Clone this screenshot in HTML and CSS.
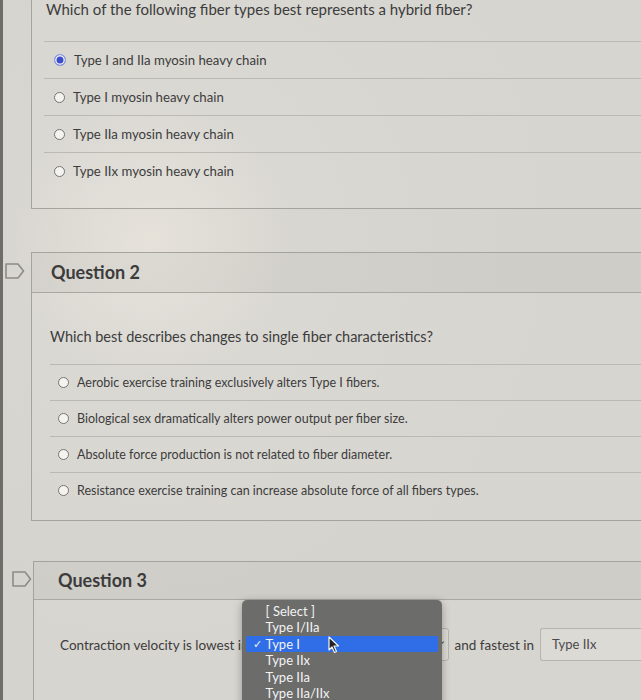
FILE: index.html
```html
<!DOCTYPE html>
<html lang="en">
<head>
  <meta charset="UTF-8" />
  <meta name="viewport" content="width=device-width, initial-scale=1" />
  <title>Quiz</title>
  <link rel="stylesheet" href="styles.css">
</head>
<body>

  <div class="screen">

    <div class="question q1">
      <div class="flag-col"></div>
      <div class="panel">
        <div class="q-body">
          <p class="q-text">Which of the following fiber types best represents a hybrid fiber?</p>
          <div class="answers">
            <div class="answer"><span class="radio checked"></span>Type I and IIa myosin heavy chain</div>
            <div class="answer"><span class="radio"></span>Type I myosin heavy chain</div>
            <div class="answer"><span class="radio"></span>Type IIa myosin heavy chain</div>
            <div class="answer"><span class="radio"></span>Type IIx myosin heavy chain</div>
          </div>
        </div>
      </div>
    </div>

    <div class="question q2">
      <div class="flag-col">
        <svg class="flag" width="22" height="18" viewBox="0 0 22 18"><path d="M2 2 H14 L19.5 9 L14 16 H2 Z" /></svg>
      </div>
      <div class="panel">
        <div class="q-header">Question 2</div>
        <div class="q-body">
          <p class="q-text">Which best describes changes to single fiber characteristics?</p>
          <div class="answers">
            <div class="answer"><span class="radio"></span>Aerobic exercise training exclusively alters Type I fibers.</div>
            <div class="answer"><span class="radio"></span>Biological sex dramatically alters power output per fiber size.</div>
            <div class="answer"><span class="radio"></span>Absolute force production is not related to fiber diameter.</div>
            <div class="answer"><span class="radio"></span>Resistance exercise training can increase absolute force of all fibers types.</div>
          </div>
        </div>
      </div>
    </div>

    <div class="question q3">
      <div class="flag-col">
        <svg class="flag" width="22" height="18" viewBox="0 0 22 18"><path d="M2 2 H14 L19.5 9 L14 16 H2 Z" /></svg>
      </div>
      <div class="panel">
        <div class="q-header">Question 3</div>
        <div class="q-body">
          <div class="fill-line">
            <span>Contraction velocity is lowest in</span>
            <div class="select first">
              <span class="arrow">&#8964;</span>
              <ul class="menu">
                <li>[ Select ]</li>
                <li>Type I/IIa</li>
                <li class="active"><span class="check">&#10003;</span>Type I</li>
                <li>Type IIx</li>
                <li>Type IIa</li>
                <li>Type IIa/IIx</li>
                <svg class="cursor" width="12" height="18" viewBox="0 0 12 18"><path d="M1 1 L1 14 L4 11 L6.5 16.5 L8.5 15.5 L6 10 L10.5 10 Z" /></svg>
              </ul>
            </div>
            <span>and fastest in</span>
            <div class="select second">Type IIx</div>
          </div>
        </div>
      </div>
    </div>

  </div>

</body>
</html>
```

FILE: styles.css
```css
html, body {
  margin: 0;
  padding: 0;
}

body {
  width: 641px;
  height: 700px;
  overflow: hidden;
  font-family: Lato, "Open Sans", sans-serif;
  color: #3c3c3c;
  background: radial-gradient(circle at 150px 240px, #e6e2da 0, #d8d6d1 140px, #d5d3ce 400px);
}

.screen {
  height: 700px;
  border-left: 3px solid #6f6d6a;
}

.question {
  display: grid;
  grid-template-columns: 28px 1fr;
}

.q2 {
  margin-top: 43px;
}

.q3 {
  margin-top: 40px;
  grid-template-columns: 30px 1fr;
}

.flag-col {
  padding-top: 10px;
}

.q2 .flag-col {
  padding-left: 1px;
}

.q3 .flag-col {
  padding-top: 9px;
  padding-left: 8px;
}

.flag {
  display: block;
  fill: none;
  stroke: #8d8b87;
  stroke-width: 1.6;
  stroke-linejoin: round;
}

.panel {
  border: 1px solid #a5a39e;
  border-right: 0;
  background: rgba(255, 255, 255, 0.06);
}

.q1 .panel {
  border-top: 0;
}

.q-header {
  height: 39px;
  line-height: 39px;
  padding-left: 19px;
  font-size: 18px;
  font-weight: 700;
  background: rgba(0, 0, 0, 0.035);
  border-bottom: 1px solid #a9a7a2;
}

.q3 .q-header {
  height: 37px;
  line-height: 37px;
  padding-left: 24px;
}

.q-body {
  padding-left: 14px;
}

.q1 .q-body {
  padding-bottom: 19px;
}

.q2 .q-body {
  padding-left: 18px;
  padding-top: 34px;
  padding-bottom: 12px;
}

.q3 .q-body {
  padding-left: 26px;
  padding-top: 28px;
  height: 80px;
}

.q-text {
  margin: 0;
  line-height: 20px;
  font-size: 15px;
}

.q1 .q-text {
  margin-top: -1px;
  margin-bottom: 22px;
}

.q2 .q-text {
  font-size: 14.5px;
  margin-bottom: 17px;
}

.answers {
  margin-left: -2px;
}

.answer {
  display: flex;
  align-items: center;
  gap: 8px;
  height: 36px;
  padding-left: 10px;
  border-top: 1px solid #bbb9b4;
  font-size: 13.2px;
}

.q2 .answers {
  margin-left: 0;
}

.q2 .answer {
  height: 35px;
  padding-left: 8px;
  font-size: 12.5px;
}

.radio {
  width: 9px;
  height: 9px;
  border: 1.5px solid #767470;
  border-radius: 50%;
  background: #f4f3f0;
  flex-shrink: 0;
}

.radio.checked {
  width: 10px;
  height: 10px;
  background: #3c4dc9;
  border-color: #8c9be0;
  box-shadow: inset 0 0 0 1.5px #f1f1f4;
}

.fill-line {
  display: flex;
  align-items: center;
  gap: 6px;
  font-size: 13.5px;
  white-space: nowrap;
}

.fill-line > * {
  flex-shrink: 0;
}

.select {
  position: relative;
  height: 33px;
  border: 1px solid #b6b4af;
  border-radius: 3px;
  background: #dcdad5;
  box-sizing: border-box;
}

.select.first {
  width: 194px;
}

.arrow {
  position: absolute;
  right: 2px;
  top: 4px;
  font-size: 11px;
  color: #444;
}

.select.second {
  width: 110px;
  padding-left: 11px;
  line-height: 31px;
  font-size: 13px;
  color: #4a4a4a;
  border-right: 0;
}

.menu {
  position: absolute;
  left: -14px;
  top: -29px;
  width: 200px;
  margin: 0;
  padding: 3px 4px 12px;
  list-style: none;
  background: #6c6c6b;
  border-radius: 5px;
  box-shadow: 0 2px 8px rgba(0, 0, 0, 0.3);
  box-sizing: border-box;
}

.menu li {
  position: relative;
  height: 16.4px;
  line-height: 16.4px;
  padding-left: 20px;
  font-size: 13px;
  color: #f3f3f3;
}

.menu li.active {
  background: #2f6ee6;
  border-radius: 2px;
}

.check {
  position: absolute;
  left: 7px;
  font-size: 11px;
}

.cursor {
  position: absolute;
  left: 86px;
  top: 36px;
  fill: #222;
  stroke: #f5f5f5;
  stroke-width: 1.2;
  stroke-linejoin: round;
}
```
